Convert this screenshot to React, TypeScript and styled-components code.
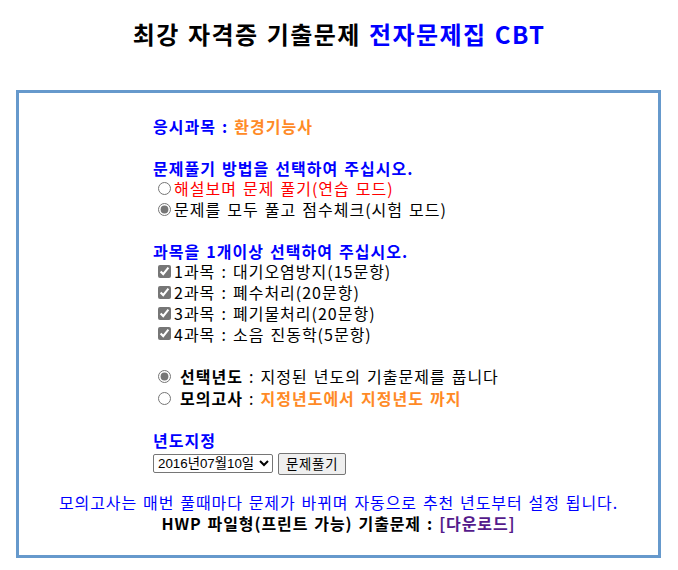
import styled, { createGlobalStyle } from 'styled-components';

const GlobalStyle = createGlobalStyle`
  body {
    margin: 0;
    background: #fff;
    font-family: 'Noto Sans CJK KR', 'Liberation Sans', sans-serif;
    font-size: 16px;
    color: #000;
  }
`;

const subjects = [
  '1과목 : 대기오염방지(15문항)',
  '2과목 : 폐수처리(20문항)',
  '3과목 : 폐기물처리(20문항)',
  '4과목 : 소음 진동학(5문항)',
];

export default function App() {
  return (
    <>
      <GlobalStyle />
      <Title>
        최강 자격증 기출문제 <Blue>전자문제집 CBT</Blue>
      </Title>
      <Panel>
        <Form>
          <Line>
            <Heading>응시과목 : </Heading>
            <Orange>환경기능사</Orange>
          </Line>

          <Section>
            <Heading>문제풀기 방법을 선택하여 주십시오.</Heading>
            <Option>
              <input type="radio" name="mode" />
              <Red>해설보며 문제 풀기(연습 모드)</Red>
            </Option>
            <Option>
              <input type="radio" name="mode" defaultChecked />
              <span>문제를 모두 풀고 점수체크(시험 모드)</span>
            </Option>
          </Section>

          <Section>
            <Heading>과목을 1개이상 선택하여 주십시오.</Heading>
            {subjects.map((s) => (
              <Option key={s}>
                <input type="checkbox" defaultChecked />
                <span>{s}</span>
              </Option>
            ))}
          </Section>

          <Section>
            <Option $tall $spaced>
              <input type="radio" name="range" defaultChecked />
              <span>
                <b>선택년도</b> : 지정된 년도의 기출문제를 풉니다
              </span>
            </Option>
            <Option $tall $spaced>
              <input type="radio" name="range" />
              <span>
                <b>모의고사</b> : <Orange>지정년도에서 지정년도 까지</Orange>
              </span>
            </Option>
          </Section>

          <Section>
            <Heading>년도지정</Heading>
            <Controls>
              <YearSelect defaultValue="2016-07-10">
                <option value="2016-07-10">2016년07월10일</option>
                <option value="2016-04-02">2016년04월02일</option>
                <option value="2016-01-24">2016년01월24일</option>
              </YearSelect>
              <SolveButton type="button">문제풀기</SolveButton>
            </Controls>
          </Section>
        </Form>

        <Footer>
          <Notice>모의고사는 매번 풀때마다 문제가 바뀌며 자동으로 추천 년도부터 설정 됩니다.</Notice>
          <Download>
            HWP 파일형(프린트 가능) 기출문제 : <Link href="#">[다운로드]</Link>
          </Download>
        </Footer>
      </Panel>
    </>
  );
}

const Title = styled.h2`
  margin: 0;
  padding: 19px 0 0;
  height: 68px;
  box-sizing: border-box;
  text-align: center;
  font-size: 24px;
  line-height: 30px;
  font-weight: bold;
  letter-spacing: 1.4px;
  word-spacing: 1.5px;
`;

const Blue = styled.span`
  color: #0000ff;
`;

const Panel = styled.div`
  margin: 22px 17px 0 16px;
  border: 3px solid #6699cc;
  padding: 23px 0 21px;
`;

const Form = styled.div`
  padding-left: 134px;
  line-height: 20.75px;
  letter-spacing: 1px;
  word-spacing: 1.5px;
`;

const Line = styled.div`
  height: 20.75px;
`;

const Section = styled.div`
  margin-top: 20.75px;
`;

const Heading = styled.span`
  color: #0000ff;
  font-weight: bold;
`;

const Orange = styled.span`
  color: #ff8a26;
  font-weight: bold;
`;

const Red = styled.span`
  color: #ff0000;
`;

const Option = styled.label<{ $tall?: boolean; $spaced?: boolean }>`
  display: flex;
  align-items: center;
  height: ${(p) => (p.$tall ? '22px' : '20.75px')};
  white-space: pre;

  input {
    width: 13px;
    height: 13px;
    margin: 0 ${(p) => (p.$spaced ? '9px' : '3px')} 0 5px;
    accent-color: #767676;
  }
`;

const Controls = styled.div`
  display: flex;
  align-items: center;
  gap: 5px;
  height: 24px;
  margin-top: 1px;
  letter-spacing: 0;
  word-spacing: 0;
`;

const YearSelect = styled.select`
  width: 120px;
  height: 19px;
  padding: 0;
  font-family: 'Liberation Sans', 'Noto Sans CJK KR', sans-serif;
  font-size: 13.33px;
  border: 1px solid #767676;
  border-radius: 2px;
  background: #fff;
`;

const SolveButton = styled.button`
  height: 22px;
  padding: 0 7px;
  font-family: 'Noto Sans CJK KR', 'Liberation Sans', sans-serif;
  font-size: 13.33px;
  letter-spacing: 0.8px;
  background: #efefef;
  border: 1px solid #767676;
  border-radius: 2px;
`;

const Footer = styled.div`
  margin-top: 16px;
  text-align: center;
  line-height: 21px;
  letter-spacing: 0.9px;
  word-spacing: 1.5px;
`;

const Notice = styled.div`
  color: #0000ff;
`;

const Download = styled.div`
  font-weight: bold;
`;

const Link = styled.a`
  color: #551a8b;
  text-decoration: none;
`;
